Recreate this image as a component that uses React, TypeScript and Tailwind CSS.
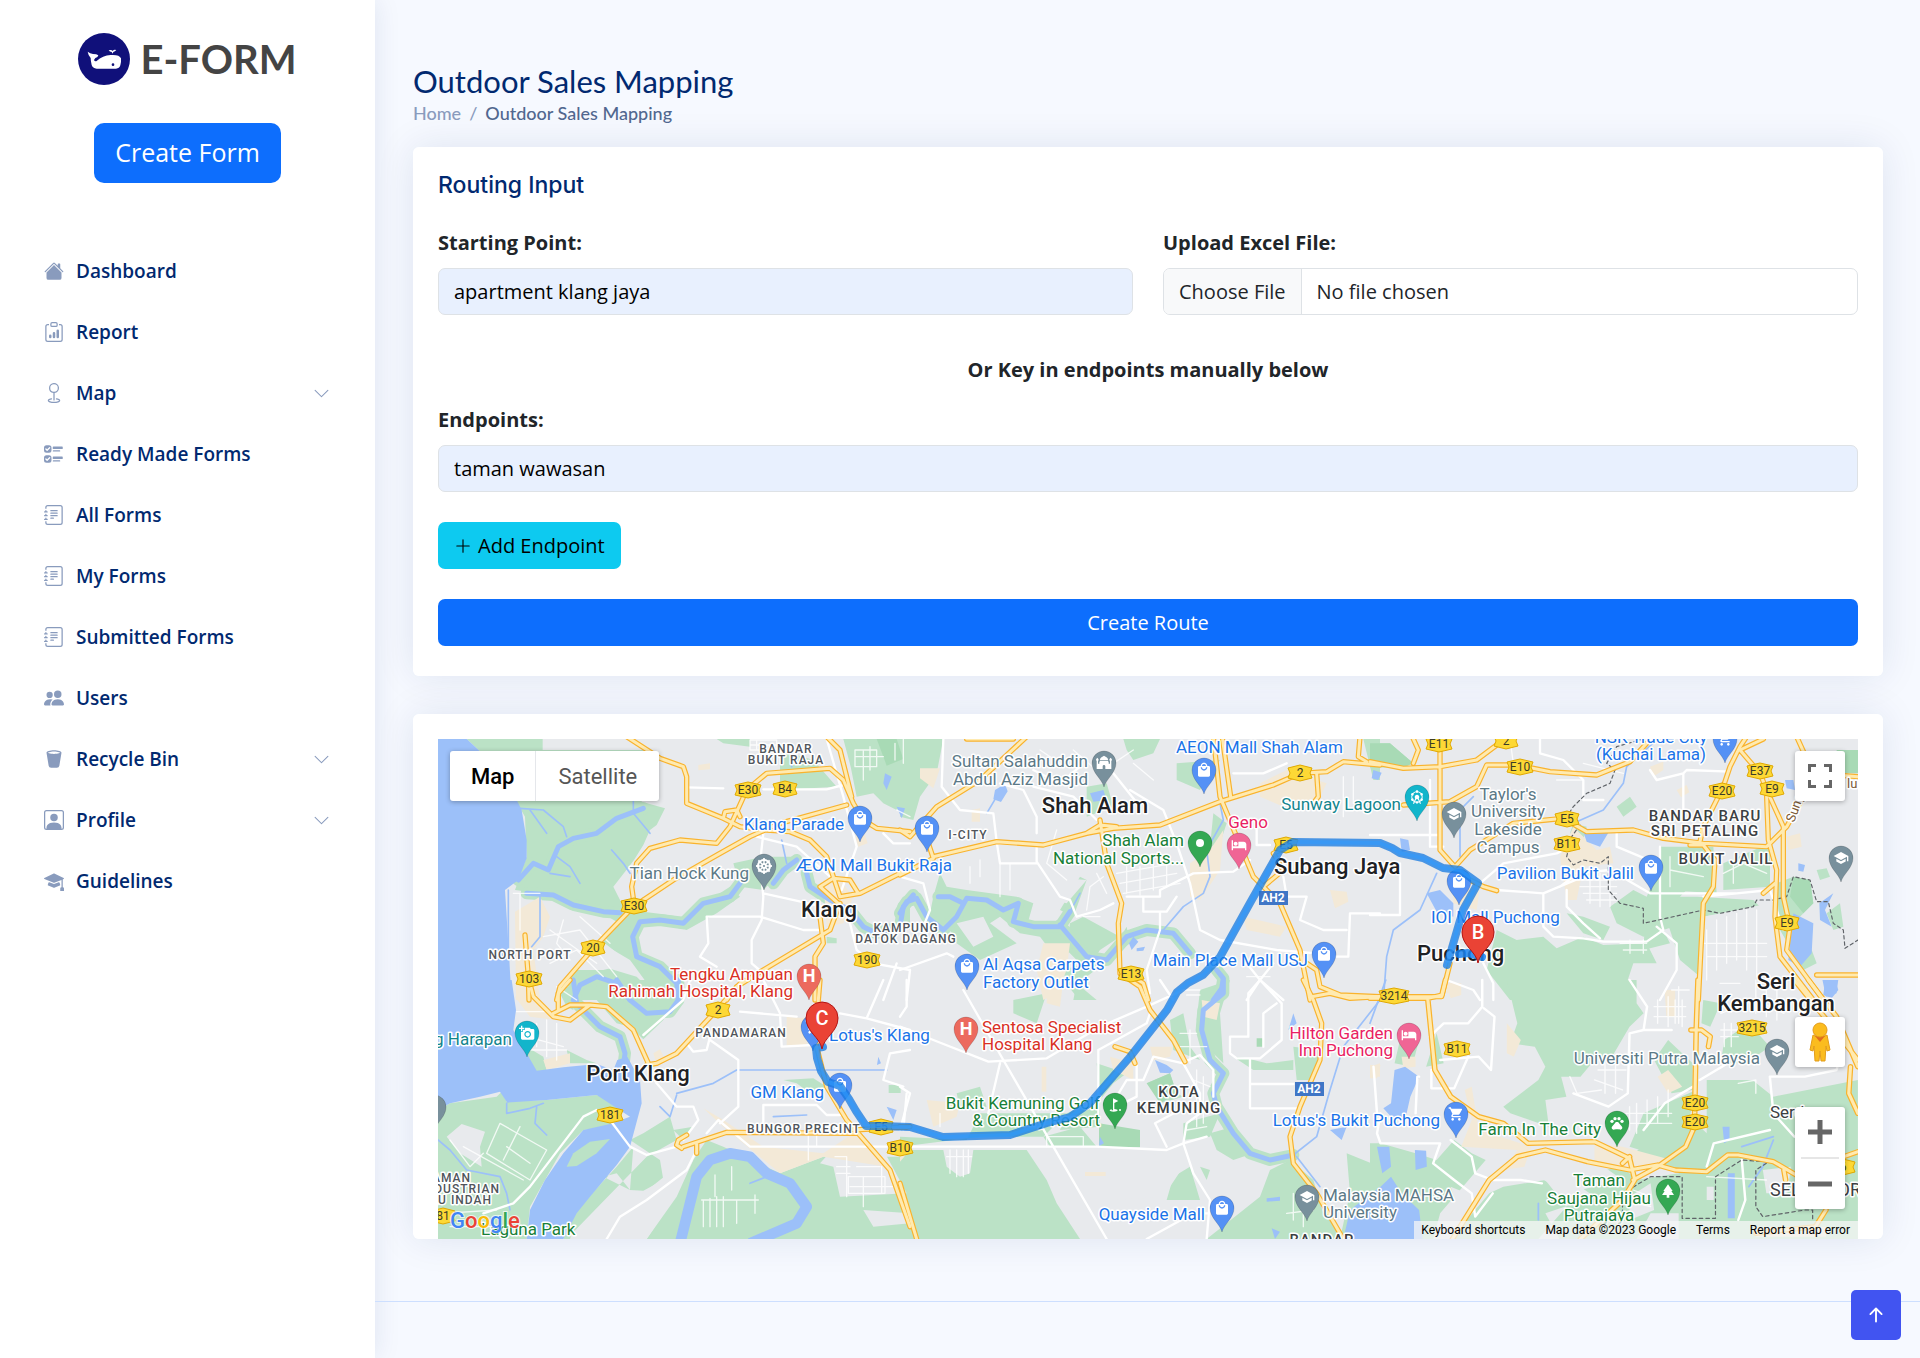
import type { ComponentType, ReactNode } from "react";
import {
  BsArrowUpShort,
  BsChevronDown,
  BsClipboardData,
  BsGeo,
  BsHouseFill,
  BsJournalText,
  BsMortarboardFill,
  BsPeopleFill,
  BsPersonSquare,
  BsPlusLg,
  BsTrash2Fill,
  BsUiChecks,
} from "react-icons/bs";
import {
  MdAddAPhoto,
  MdAttractions,
  MdGolfCourse,
  MdHotel,
  MdLocalMall,
  MdMosque,
  MdPark,
  MdPets,
  MdSchool,
  MdShoppingCart,
} from "react-icons/md";
import { FaDharmachakra } from "react-icons/fa";

type Icon = ComponentType<any>;

/* ---------------------------------------------------------------- sidebar */

const NAV: { label: string; icon: Icon; menu?: boolean }[] = [
  { label: "Dashboard", icon: BsHouseFill },
  { label: "Report", icon: BsClipboardData },
  { label: "Map", icon: BsGeo, menu: true },
  { label: "Ready Made Forms", icon: BsUiChecks },
  { label: "All Forms", icon: BsJournalText },
  { label: "My Forms", icon: BsJournalText },
  { label: "Submitted Forms", icon: BsJournalText },
  { label: "Users", icon: BsPeopleFill },
  { label: "Recycle Bin", icon: BsTrash2Fill, menu: true },
  { label: "Profile", icon: BsPersonSquare, menu: true },
  { label: "Guidelines", icon: BsMortarboardFill },
];

function WhaleLogo() {
  return (
    <svg viewBox="0 0 156 156" className="size-[52px]" aria-hidden="true">
      <circle cx="78" cy="78" r="78" fill="#10107a" />
      <path
        fill="#fff"
        d="M29 56Q36 62 45 63Q56 63 61 67Q60 73 52 75L48 81Q50 86 56 84Q74 68 98 66Q124 64 129 76Q130 88 127 97Q124 107 114 107H56Q44 106 41 96Q38 84 38 75Q31 68 29 56Z"
      />
      <path fill="#fff" d="M92 52Q101 49 104 54Q108 48 115 51Q111 56 106 57L104 62L101 57Q95 57 92 52Z" />
      <circle cx="105" cy="95" r="4" fill="#10107a" />
    </svg>
  );
}

function Sidebar() {
  return (
    <aside className="flex w-[375px] shrink-0 flex-col bg-white px-[25px] shadow-[0_0_25px_rgba(1,41,112,0.1)]">
      <a href="#" className="mt-[33px] flex items-center justify-center gap-2.5">
        <WhaleLogo />
        <span className="font-[Lato] text-[40px] leading-[50px] font-bold text-[#444]">E-FORM</span>
      </a>
      <button
        type="button"
        className="mt-[38px] h-[60px] self-center rounded-[10px] bg-[#0d6efd] px-[21px] text-[25px] text-white"
      >
        Create Form
      </button>
      <nav className="mt-[60px]">
        <ul className="flex flex-col gap-[5px]">
          {NAV.map(({ label, icon: Glyph, menu }) => (
            <li key={label}>
              <a
                href="#"
                className="flex h-14 items-center rounded pr-5 pl-[19px] text-[19px] font-semibold text-[#012970]"
              >
                <Glyph className="mr-3 size-5 text-[#899bbd]" />
                {label}
                {menu && <BsChevronDown className="ml-auto size-[17px] text-[#899bbd]" />}
              </a>
            </li>
          ))}
        </ul>
      </nav>
    </aside>
  );
}

/* --------------------------------------------------------------- map data */

/* The terrain is drawn on six sheets: A B C along the top, D E F below. */
const SHEET = {
  A: "translate(-8 -9) scale(.33333)",
  B: "translate(462 -9) scale(.33333)",
  C: "translate(932 -9) scale(.33333)",
  D: "translate(-8 241) scale(.33333)",
  E: "translate(462 241) scale(.33333)",
  F: "translate(932 241) scale(.35075 .33333)",
} as const;

type Sheets = Partial<Record<keyof typeof SHEET, string>>;

const GREEN: Sheets = {
  A: "M110 27H338V60H640L635 215L705 235L680 285L660 300L640 345L612 390L585 425L550 470L575 520L610 540L560 575L500 540L430 540L330 490L255 480L290 380L285 260L200 110ZM1240 27H1440V210L1400 240L1360 220L1330 190L1280 200L1262 110ZM1050 60L1150 90L1220 170L1050 180ZM860 27H960V50L880 40ZM640 500L515 640L600 690L640 745L680 800L740 740L650 700L620 640L640 570L770 600L860 550L930 500L900 470L760 560L640 545ZM910 400L1000 380L1100 380L1000 480L930 470ZM430 720L520 710L620 740L680 800V810H430ZM1190 620l30 5v15h-30ZM1440 500L1410 560L1440 600Z",
  B: "M0 27H130L110 130L60 200L40 270L0 260ZM670 27H780L760 70L700 90L680 60ZM830 100L960 90L900 180L830 150ZM560 170L620 160L640 230L560 260ZM120 430L140 470L200 480L350 500L400 520L380 590L470 580L540 600L560 640L520 650L480 700L420 620L360 610L300 560L270 580L350 640L240 690L170 640L150 600L90 550L100 500ZM550 560L660 620L600 660L560 720L500 660L510 580ZM480 540L540 440L560 450L520 560ZM680 590L690 640L560 740L520 770L480 720L620 690ZM1390 27H1440V150H1420ZM530 760l60 50h-70ZM940 250l40 30-20 60-30 10Z",
  C: "M0 40L60 40L130 100L100 112H0ZM610 280L650 290L640 330L600 310ZM860 430L930 450L950 480L870 560L900 590L820 620L740 580L720 530L790 480L830 500ZM380 600L440 630L520 620L560 655L640 620L700 645L830 640L860 700L790 700L770 760L790 810H420L350 720ZM590 550L640 560L720 590L700 630L640 610ZM830 500L980 500L1150 510L1170 530L1000 560L880 600L900 640L820 660ZM870 350L1030 350L1040 490L880 480ZM1060 400L1200 340V470L1060 480ZM1270 440L1320 450L1330 520L1290 560L1210 520L1220 460ZM1340 420L1370 415L1380 440L1350 450ZM1370 550L1410 520L1420 590L1390 600ZM890 570L1000 540L990 740L930 690ZM1220 470L1280 540L1340 700L1300 720L1230 600ZM740 230l40-30 20 30-40 30Z",
  D: "M24 390L60 370L200 350L215 335L230 365L350 360L500 345L580 370L540 400L560 440L460 450L390 520L300 680L290 777H24ZM610 500L600 630L560 580L520 590L470 600L450 680L420 777H400L440 690L560 560ZM410 777L470 600L520 590L600 630L640 632L700 600L690 540L600 480L640 460L720 410L740 480L650 530ZM650 777L740 640L790 540L830 480L880 500L1050 580L1180 530H1440V777ZM500 0H760L700 120L640 178L600 140L560 130L500 60ZM290 200L340 230L350 270L320 275L290 230ZM410 210L470 240L500 250L420 250ZM1060 300L1150 295L1190 320L1140 340L1100 310ZM1376 315h36v24h-36ZM380 20h50v70l-20-10ZM730 450L790 440L760 480Z",
  E: "M0 510H380L440 600L470 670L540 777H0ZM340 60L440 40L410 130L340 100ZM430 470L540 440L590 500H450ZM240 400L500 400L430 470H240L0 500V470L200 480ZM170 340L240 320L260 380L180 390ZM740 310L810 280L830 340L850 350L780 370L770 340ZM810 120L850 100L870 200L900 240L820 210ZM500 400L600 360V440L480 450ZM590 250L680 280L640 310L600 360ZM930 460L1000 440L1030 500L1060 520L1000 540L950 510ZM1000 230L1060 270L1180 270V240L1100 250L1040 235ZM870 560L900 660H800L820 590ZM900 560L930 570L920 600ZM1170 540L1240 600L1270 700L1340 777H920L980 730L1080 650L1110 570ZM1180 200L1260 210L1240 300L1190 300ZM850 430L960 400L930 470L850 480ZM900 30L990 0L960 100L970 250L920 200L890 120ZM1340 520L1440 560V777H1320L1350 640ZM490 0H560L530 50Z",
  F: "M390 0H760V70L780 100L740 140L690 230L640 240L600 290L545 290L560 350L500 360L510 440L400 400L380 380L480 300L500 260L470 200L400 190L420 130ZM0 490L30 490L130 520L190 540L240 480L290 520L330 540L200 700L180 777H0ZM230 777L340 640L380 620L500 600L560 680L480 777ZM560 590L640 650L500 700L540 777H760L800 700L880 700L880 580L760 600L720 560ZM740 530L800 480L900 400L960 460L960 300L1090 300L1150 350L1391 300V777H880V570L780 560ZM810 240L850 180L920 250V330L860 340ZM1010 180L1080 130L1140 200L1070 250L1000 250ZM190 160L210 250L160 260ZM90 160L140 180L120 260L70 250ZM950 60L1000 70L970 140L945 130ZM740 500L780 400L930 330L900 460L800 520Z",
};

const PARK: Sheets = {
  A: "M1340 27h60l20 60-50 20Z",
  C: "M0 40L60 40L130 100L100 112H0ZM1400 60H1464V130H1400ZM1270 440L1320 450L1330 520L1300 550L1260 500Z",
  E: "M597 430L720 450V502H597ZM740 310L810 280L830 340L780 370ZM1070 175h20v25h-20Z",
};

const GREY: Sheets = {
  A: "M340 590L420 540L480 570L500 620L600 700L520 720L440 720L380 780L330 810V650Z",
  B: "M170 580L250 560L280 620L220 650ZM430 440L560 450L500 520L420 500Z",
  C: "M620 450L720 450L740 520L640 510ZM1000 560L1200 520L1220 640L1100 700L1000 690Z",
  D: "M50 470L95 432L165 455L150 500L155 560L90 520ZM1190 528H1370L1430 640L1230 650L1210 560L1170 550ZM1300 690L1440 700V730L1330 740ZM640 640L740 560L790 540L740 650L650 777H520L520 720Z",
  E: "M130 510H220L210 580L180 590L140 560ZM590 560L780 520L850 560L790 650L640 660Z",
  F: "M340 560L460 520L640 540L720 600L560 640L480 590L360 620ZM1120 570L1200 560L1190 640L1130 640ZM740 650L800 610L810 690L740 720ZM230 620L300 650L260 720ZM960 620h20v40h-20Z",
};

const SAND: Sheets = {
  A: "M255 545L330 500L360 560L340 620L310 660L330 810H258ZM1180 450L1230 450L1270 500L1240 580L1190 590ZM805 105l35-5v18l-35 3ZM1275 320l30-5 8 25-28 10Z",
  B: "M930 360L970 300L960 420L900 510L870 500L870 400ZM1080 160L1160 120L1280 160L1260 200L1150 230L1080 200ZM430 640L510 640L500 720L470 790L430 810L410 720ZM1030 560L1160 590L1140 620L1040 600ZM1290 480l50 5 5 30-40 20ZM215 240l25-5v40h-25ZM60 115h60l-20 60-40-30Z",
  C: "M610 290L680 360L720 350L730 400L640 410L620 510L590 510L570 380ZM250 480L330 470L320 540L250 520ZM230 760h40v30h-40ZM1250 320l40-10 5 40-40 10ZM920 180l30-15 8 22-25 15ZM840 110l40-15v25l-30 20Z",
  D: "M340 240L420 220V250L350 270ZM820 385L880 420L1000 500L1180 520L1270 460L1370 560L1180 530L1050 580L880 440ZM1070 110l60 5v85h-60ZM255 50L330 60L380 120L300 110ZM670 220l20-12 15 30-25 15Z",
  E: "M80 360L180 370L170 410L100 440ZM750 200L820 200L810 230L760 240ZM630 230L700 250V300L640 270ZM425 260h14v75h-14ZM555 576h62v12h-62ZM440 0H490L480 80L440 70ZM905 60L960 70L950 120L910 110ZM1410 260l30-10v40h-20ZM0 510h30L0 545Z",
  F: "M390 130L430 180L410 230L390 220ZM90 230H130V260L95 265ZM270 330L290 320L310 450L460 500L440 560L380 570L420 510L260 500L290 420ZM640 490L720 500L860 540L800 580L720 560L640 540ZM840 30h30v80h-25ZM820 290l30-20 40 50-40 20ZM215 10h45v35l-30 10ZM0 255h30l-10 40H0ZM1100 740h200v30h-200Z",
};

const WATER: Sheets = {
  A: "M24 27H110L200 110L250 190L275 240L290 330L290 385L265 450L225 480L230 560L245 810H24ZM1365 130l20 10-15 40-10-20ZM1400 230l25 5-10 30Z",
  B: "M285 180l30-18 8 22-20 32-23-8ZM570 190l40-10 10 30-40 5ZM700 620l15 15-20 25-8-20ZM710 655l25-5-5 12-20 2Z",
  C: "M170 490L210 480L250 520L250 560L200 545ZM640 305L720 300L690 350L650 335ZM1270 550L1330 580L1325 670L1290 710L1255 690ZM1348 520L1390 490L1365 540L1385 590L1350 570ZM1365 755l30-5 10 30-20 25-25-10ZM1285 400l20 5-5 20-15-3ZM1245 150l25 0 5 30-25-5ZM90 325l25 5 5 30-25 5ZM10 120l25 8-10 22-20-5Z",
  D: "M24 0H245L258 90L250 150L290 220L320 272L400 262L500 252L550 270L562 240L592 230L630 300L635 370L600 500L560 555L480 650L440 700L400 777H290L300 690L345 600L400 520L460 450L540 432L600 410L500 345L350 360L232 368L210 335L150 350L60 370L24 390ZM1345 230l8 20-12 5ZM1370 380l30 10-10 30Z",
  E: "M1330 777L1350 690L1440 620V777ZM1290 450L1340 440L1325 480ZM765 240L800 255L820 270L810 280L780 278ZM1100 655L1140 650V662L1100 665ZM1115 745l25 10-15 22ZM1180 100l10 30-25 20ZM600 470l12 20-15 8Z",
  F: "M70 270L100 260L140 290L115 350L100 420L60 410L38 385L60 370ZM20 500H55L60 560L35 580ZM128 510L160 512L162 560L130 570ZM0 650L60 590L90 640L140 690L150 777H0ZM1020 580H1040V715H1020ZM1290 0H1335L1330 40L1300 50ZM1005 440h20v40l-15 10Z",
};

const ISLAND = "M410 560L430 520L480 485L540 477L500 520L440 558Z";

const RIVER: Sheets = {
  A: "M265 450L310 400L355 420L385 350L430 325L500 310L560 265L640 235M290 490L370 495L430 525L520 545L570 548M1100 390L1060 420L1030 460M930 460L900 500L820 520L760 580L690 570L630 575L608 620L620 680L690 710L740 760L745 810M430 810L450 765L500 740L560 760L600 810M1130 430L1140 470L1200 510L1260 540L1300 590L1340 610L1410 590L1420 530L1450 495",
  B: "M0 550L20 515L50 505L80 560L130 600L170 560L200 505L260 510L310 540L355 520L340 575L400 590L480 590L510 545M115 500L150 500L190 520M480 585L560 680L620 690L680 620L740 600L820 610L870 670M950 720L970 745L965 775L940 810",
  D: "M430 0L440 70L510 140L570 170L585 220L580 260M560 0L600 60L650 100L720 95L745 60V0",
  E: "M970 0L970 40L910 90L905 150L930 240L970 280L940 340L950 380L1000 460L1050 520L1110 540L1180 525",
};

const STREAM: Sheets = {
  A: "M270 235L340 240L400 290L410 320M610 215V250L660 310M380 380L420 410L450 460M330 490V620L305 650M235 480V810M545 360L580 400L600 430M360 430L420 440M1055 330L1070 400M1085 60V110M300 240L350 310",
  B: "M790 600L850 530L910 490L930 440L920 360L970 270L960 220M510 545L540 490M260 250L290 200",
  C: "M310 200L270 240V380M860 30L770 110L760 160L700 240L610 280M200 430L150 540L70 600L50 680L40 810",
  D: "M740 340L850 310L920 270H1370M690 380L720 410L740 345M230 370V400L300 385L340 370M320 380L315 430L350 465M24 480L60 510L110 570L210 590L230 640L240 690M960 610L1010 590M1030 410L1130 405",
  E: "M1180 525L1250 470L1290 330L1330 200L1440 60M1190 530L1260 620",
  F: "M45 0L0 130M1150 480L1120 560L1080 620M480 670V720M1060 500L1150 470",
};

const LOOP = "M750 790L775 690L800 590L840 540L900 520L960 530L1010 580L1080 610L1130 680L1100 730L960 790";

const ROAD: Sheets = {
  A: "M770 172L880 175M1000 178H1190L1240 165M1190 27L1240 200L1280 350L1235 480M1000 310L990 400L1000 500L995 570L965 630V700L1000 730M830 560H990L1120 600H1170M830 560L835 640L810 680L860 710M1000 490L1180 530M1260 580L1280 660L1330 700L1440 720M980 320L1100 350L1200 440M1400 700L1360 810M1360 310L1390 340H1440",
  B: "M130 27L125 170L180 240L280 250L290 335L300 400H410M300 160L370 180L410 260V310M290 340H410V395L480 500L510 510L530 560L600 540L640 520M590 270L520 200L400 170M690 180L790 240L830 340L870 460L900 600L960 630L1130 660L1250 670M680 500H780V480L880 430L1000 425L1050 390M730 500V545H800L830 500M780 545V600L740 720L750 790M1000 130L1090 130L1160 100M1070 290V345H1110M1150 440L1160 500H1220L1200 570L1270 600H1340M1350 550L1345 680H1280M1350 550H1440M0 720L140 670L160 680M30 720L20 810M1040 700L1080 750L1120 700M1080 750L1040 810M1080 750L1150 810M0 440L70 460L90 540L70 590M400 120L480 160L540 110M640 130L720 230",
  C: "M330 460L400 400L560 370L600 350M380 480L520 490L640 440M840 490H1000L1100 490L1200 480M520 490V590L550 620L640 625L700 635L830 635L880 600L870 560V350M590 480V530L640 580L690 625M510 27V70L580 90L640 150V210H700M840 120L860 150L940 130L950 120L1080 125M940 130V240M90 400V555H0M340 700L370 760V810M230 750L310 780L330 810M860 590L920 640V720L870 810M180 150V350H220M0 315H210M620 430L720 420L840 490M740 300V350L860 400M1000 500L1100 490M610 440L570 470M1200 480L1240 600",
  D: "M650 260L680 310L740 380L790 380L805 420L760 480M540 420L600 500L650 525L740 500M500 390L460 410L300 620L250 670L160 700M800 510L770 570L650 660L570 710L530 777M870 430L925 380V240L840 180M840 170L830 210L790 215L770 190M1000 0L1050 100L1055 200L1150 195M930 95L1100 110M1230 100L1310 115L1440 150M1310 115L1360 0M1440 210L1380 220L1360 300L1420 320M1000 375H1160L1190 405H1230M1000 375V430M830 460L865 420L960 500H1370M1430 340L1420 450M640 165L760 60L780 0",
  E: "M190 30L310 240L460 500L620 777M0 140L100 180L265 245L440 235L600 140L740 80L850 30M265 400L300 250M0 500H590L800 510L850 490L920 470M595 210V400M850 490L880 580L930 660L920 777M740 777L880 700H925M650 350L680 300H730L760 230L850 250L900 340V400L860 430L850 490M855 245L900 225L940 270V350M990 170V220L1010 235H1080L1145 180V70L1080 0L1045 40V170H990M1050 240V385H1190M1050 312H1180M765 430L800 500M765 430L840 390M595 210L740 130L750 100M780 0L820 60M710 250V350L650 380M0 320L30 340L0 450M1090 200V100L1130 70M20 0V80L0 110",
  F: "M320 0L320 80L280 130L210 130L170 170M325 85L355 110L345 270L310 230L200 240M30 490H200L180 550L240 600L290 640L300 710L350 640M230 480L290 530L300 580L350 600L430 600L490 610M30 400L20 460L30 490M10 260L20 400M140 290H135L130 400M175 270V325H240L280 230M740 0L790 80L780 150L740 160L735 340L680 380L580 340M940 300L1020 250M1140 290H1240L1330 270L1350 200M1140 290L1150 400L1210 470M960 560L980 490L1140 450M780 450L840 370L920 320M780 150H860M1060 540L1070 660L1050 720",
};

const LANE: Sheets = {
  A: "M340 620L450 600L560 740M360 700L440 660L520 740M400 570L380 640L420 690M450 560L540 640M360 600L500 700M960 30H1040V60H960ZM960 45H1040M980 30V60M1275 60H1340V110H1275ZM1275 80H1360M1300 60V150M1320 50V120M250 490H330M270 490V600M1395 40V90M1420 27V100M1400 240L1440 260",
  B: "M560 540L570 470L610 440M590 430L620 490M650 430L820 400M660 460L830 430M670 490L840 460M680 410V490M720 410V495M760 400V480M800 400V470M210 410V460M240 390V440M300 400V500M330 400V480M470 300L440 400L500 450M700 100L760 150M640 100L700 60M520 60L600 130M420 60L480 100M1040 740H1110M550 560L600 560M1330 140V260M1360 140V220",
  C: "M620 450H730M630 470H740M640 490H740M650 510H740M660 440V520M690 430V530M720 430V530M1010 600V750M1040 570V720M1070 560V700M1100 550V690M1130 540V720M1160 540V740M990 640H1190M1010 680H1190M1050 760H1110M750 640H830M760 660H830M780 630V670M820 630V670M1060 430L1120 400L1190 430M1090 390V460M900 420L1000 440M900 380V470M420 27L430 100M560 150H640M640 100L760 130",
  D: "M100 500L280 600M210 430L350 510L300 600L170 520ZM60 480L120 560L160 520M230 500L300 550M270 440L220 540M815 660H985M820 660V740M840 655V740M860 650V740M880 650V740M920 660V730M975 645V700M855 585V650M905 560V630M1215 530H1250V650M1220 560H1260M1220 580H1260M1255 590H1365V640H1255ZM1300 590V680M1280 560H1350M1355 560V640M1260 620H1390M320 130V200M350 120V230M380 130V240M290 170L400 200M300 210H410M260 95H380M40 700L200 690M60 740H260M380 20L440 60M1135 460V540M1160 440V500",
  E: "M150 510V580M170 510V590M190 510V590M205 510V580M140 530H215M840 160H890M840 200H920M870 150V250M890 270V440M910 290V430M880 300L930 320M860 450L920 440M440 500V470H550V500M120 400V440M1180 640V720M1210 640V740M1160 700L1240 690M850 30H900M860 45H900",
  F: "M820 60V130M850 50V140M870 60V130M890 60V140M810 80H900M810 110H900M740 380V450M760 370V460M790 360V440M820 350V430M850 330V410M730 400H860M740 430H860M880 20V130M860 30H910M640 300L720 330M650 270H730M670 250V340M700 250V340M1000 150H1050M1000 170H1050M1010 130V200M1030 130V200M1000 100L1100 60L1180 100M1100 0V100M1130 20V110M1160 30V120M570 290L590 340L660 330M750 630L800 650M760 670L800 680M960 590L1130 600M1100 340V300L1050 310",
};

const DASH: Sheets = {
  C: "M820 27L740 50L710 100L735 120L720 160L650 190L610 230L590 260M630 285L605 320L590 380L610 405L640 390L690 400L715 380V480L750 520L820 535V580L1000 540L1050 550L1150 530L1160 510L1210 510L1250 500L1270 440L1320 450L1340 515L1375 515L1390 580L1420 600L1425 655L1464 630",
  F: "M720 700V640L800 590H890V715H985V590L1060 540L1120 545M1130 550L1100 570V680L1120 710L1240 690H1262V720",
};

const HIGHWAY: Sheets = {
  A: "M590 20L690 85L760 110L770 140V220L880 265L930 290L1010 300L1080 305L1140 330L1190 380L1210 440L1230 500M612 520L605 470L620 400L660 355L750 330L860 340L900 290L950 180L1010 130L1200 115L1240 150L1270 220L1300 270L1340 295L1440 305M380 810L390 770L490 655L610 530L730 450L870 370L960 320L1050 280L1250 225M1190 20L1230 60L1265 200M1230 500L1290 490L1440 415M1230 520L1200 600L1000 720L920 770L890 810M1170 560L1180 640L1155 680V810M285 615L295 740L297 810M880 265L885 245L920 240L930 260M1225 520L1170 470L1210 445L1260 450L1285 490",
  B: "M0 300L30 320L110 230L240 150L380 20M100 380L290 335L430 345L560 310L640 295L780 285L960 215L1120 165L1200 130L1280 125L1330 95L1440 105M0 435L100 385L85 340M600 270L620 400L665 520L655 580L660 730M690 735L730 760L745 810M940 20L960 200L1010 320L1060 440L1140 520L1200 660L1230 810M968 30L992 200M1380 20L1375 80L1400 95M1250 130L1255 200L1240 220M1180 340L1120 370L1150 420L1090 470M1220 700L1250 720L1260 770L1320 795L1440 800M200 27H340M560 310L600 285L650 290",
  C: "M0 95L100 115L210 110L320 90L400 30M210 50V360L250 405M100 225L240 215L320 170L350 105L440 105L540 125L680 135L780 95L830 40M255 410L300 360L430 280L580 265L650 305L790 300L880 325L1000 340L1190 350L1250 290L1300 200M1000 345L1035 390L1030 470L1000 520L985 810M990 335L1000 290L1030 230L1060 170L1080 110L1110 50L1130 20M1110 60L1170 130L1190 180L1240 290L1240 500L1260 590L1250 660L1360 810M1190 200L1195 330L1220 420L1215 560L1230 680L1330 810M1280 20L1330 130L1464 140M1464 735H1340M300 450L340 470L380 482M240 700L215 800H0M1110 60L1180 27M130 27L145 60L130 100M960 345H1000M1215 460L1180 490",
  D: "M297 0L310 50L370 110L420 120L480 75L530 80L610 150L655 250M420 0L385 40V90M370 100L420 75L480 75M650 255L680 250L740 220L860 90L940 0M760 500L890 457L1280 460M755 505L740 495L745 480L770 465M1170 0L1155 180L1190 320L1250 420L1380 570L1440 740M1270 450L1440 440M800 490V520",
  E: "M690 0L720 20L750 90L820 180L855 245M645 200L690 215L705 250M1210 0L1240 60L1265 130L1260 240L1200 380L1170 470L1180 550L1250 640L1330 777M1235 50L1290 40L1350 55L1440 50M0 610L50 777M0 440L20 442",
  F: "M215 0L205 45L165 55H0M165 60L185 270L230 350L310 410L380 430L450 490L640 485L740 535L755 600L720 660L600 777M235 777L340 600L420 530L500 510L620 545L740 570L820 555L870 570L960 575L1020 525L1050 525L1150 545L1215 585M750 600L820 560L900 500L925 440L930 150L935 0M915 150H945L970 170L965 200M1210 0L1310 130L1391 240M1250 0L1330 110L1391 260M1370 260L1365 340L1391 400M1270 560L1391 515M1300 690L1270 740L1100 760M720 550L740 530M1180 570L1185 600",
};

type Label = [text: string, x: number, y: number, anchor?: "start" | "middle" | "end"];

const BLUE_LABELS: Label[] = [
  ["Klang Parade", 406, 91, "end"],
  ["ÆON Mall Bukit Raja", 358, 132],
  ["AEON Mall Shah Alam", 738, 14],
  ["Main Place Mall USJ", 870, 227, "end"],
  ["Al Aqsa Carpets", 545, 231],
  ["Factory Outlet", 545, 249],
  ["Pavilion Bukit Jalil", 1196, 140, "end"],
  ["IOI Mall Puchong", 993, 184],
  ["NSK Trade City", 1213, 4, "middle"],
  ["(Kuchai Lama)", 1213, 21, "middle"],
  ["Lotus's Klang", 391, 302],
  ["GM Klang", 386, 359, "end"],
  ["Quayside Mall", 767, 481, "end"],
  ["Lotus's Bukit Puchong", 1002, 387, "end"],
];
const GREY_LABELS: Label[] = [
  ["Tian Hock Kung", 311, 140, "end"],
  ["Sultan Salahuddin", 650, 28, "end"],
  ["Abdul Aziz Masjid", 650, 46, "end"],
  ["Taylor's", 1070, 61, "middle"],
  ["University", 1070, 78, "middle"],
  ["Lakeside", 1070, 96, "middle"],
  ["Campus", 1070, 114, "middle"],
  ["Malaysia MAHSA", 885, 462],
  ["University", 885, 479],
  ["Universiti Putra Malaysia", 1322, 325, "end"],
];
const GREEN_LABELS: Label[] = [
  ["Shah Alam", 746, 107, "end"],
  ["National Sports...", 746, 125, "end"],
  ["Bukit Kemuning Golf", 662, 370, "end"],
  ["& Country Resort", 662, 387, "end"],
  ["Farm In The City", 1163, 396, "end"],
  ["Taman", 1161, 447, "middle"],
  ["Saujana Hijau", 1161, 465, "middle"],
  ["Putrajaya", 1161, 482, "middle"],
  ["Laguna Park", 43, 496],
];
const RED_LABELS: Label[] = [
  ["Tengku Ampuan", 355, 241, "end"],
  ["Rahimah Hospital, Klang", 355, 258, "end"],
  ["Sentosa Specialist", 544, 294],
  ["Hospital Klang", 544, 311],
];
const PINK_LABELS: Label[] = [
  ["Geno", 810, 89, "middle"],
  ["Hilton Garden", 955, 300, "end"],
  ["Inn Puchong", 955, 317, "end"],
];
const TEAL_LABELS: Label[] = [
  ["Sunway Lagoon", 963, 71, "end"],
  ["Tanjung Harapan", 74, 306, "end"],
];
const CITY_LABELS: Label[] = [
  ["Klang", 391, 178, "middle"],
  ["Shah Alam", 657, 74, "middle"],
  ["Subang Jaya", 836, 135],
  ["Puchong", 979, 222],
  ["Seri", 1338, 250, "middle"],
  ["Kembangan", 1338, 272, "middle"],
  ["Port Klang", 200, 342, "middle"],
];
const AREA_LABELS: Label[] = [
  ["BANDAR", 348, 14, "middle"],
  ["BUKIT RAJA", 348, 25, "middle"],
  ["KAMPUNG", 468, 193, "middle"],
  ["DATOK DAGANG", 468, 204, "middle"],
  ["NORTH PORT", 92, 220, "middle"],
  ["I-CITY", 530, 100, "middle"],
  ["PANDAMARAN", 303, 298, "middle"],
  ["BUNGOR PRECINT", 366, 394, "middle"],
  ["TAMAN", 33, 443, "end"],
  ["INDUSTRIAN", 62, 454, "end"],
  ["PULAU INDAH", 54, 465, "end"],
];
const DISTRICT_LABELS: Label[] = [
  ["BANDAR BARU", 1267, 82, "middle"],
  ["SRI PETALING", 1267, 97, "middle"],
  ["BUKIT JALIL", 1288, 125, "middle"],
  ["KOTA", 741, 358, "middle"],
  ["KEMUNING", 741, 374, "middle"],
  ["BANDAR", 884, 506, "middle"],
];

const SHIELDS: [text: string, x: number, y: number][] = [
  ["E30", 310, 51], ["B4", 347, 50], ["E30", 196, 167], ["20", 155, 209], ["103", 91, 240],
  ["190", 429, 221], ["E5", 848, 106], ["2", 862, 34], ["E13", 693, 235], ["E11", 1001, 5],
  ["2", 1068, 2], ["E10", 1082, 28], ["E5", 1129, 80], ["B11", 1129, 105], ["E20", 1284, 52],
  ["E37", 1322, 32], ["E9", 1334, 50], ["E9", 1349, 184], ["3214", 956, 257], ["2", 280, 271],
  ["181", 172, 376], ["E5", 443, 388], ["B10", 462, 409], ["81", 5, 477], ["B11", 1019, 310],
  ["3215", 1314, 289], ["E20", 1257, 364], ["E20", 1257, 383], ["6", 1405, 428],
];

const BLUE = "#5491f5";
const SLATE = "#78909c";
const PINS: [x: number, y: number, color: string, glyph: Icon | "H" | "dot"][] = [
  [422, 103, BLUE, MdLocalMall],
  [326, 151, SLATE, FaDharmachakra],
  [371, 261, "#ec6a5e", "H"],
  [666, 48, SLATE, MdMosque],
  [766, 55, BLUE, MdLocalMall],
  [489, 113, BLUE, MdLocalMall],
  [762, 128, "#34a853", "dot"],
  [801, 130, "#f06595", MdHotel],
  [886, 239, BLUE, MdLocalMall],
  [529, 251, BLUE, MdLocalMall],
  [979, 82, "#12b5cb", MdAttractions],
  [1016, 99, SLATE, MdSchool],
  [1213, 152, BLUE, MdLocalMall],
  [1021, 166, BLUE, MdLocalMall],
  [1287, 24, BLUE, MdShoppingCart],
  [1403, 143, SLATE, MdSchool],
  [375, 312, BLUE, MdShoppingCart],
  [89, 318, "#12b5cb", MdAddAPhoto],
  [402, 370, BLUE, MdLocalMall],
  [-4, 392, SLATE, "dot"],
  [528, 314, "#ec6a5e", "H"],
  [677, 390, "#34a853", MdGolfCourse],
  [784, 493, BLUE, MdLocalMall],
  [869, 482, SLATE, MdSchool],
  [971, 320, "#f06595", MdHotel],
  [1018, 399, BLUE, MdShoppingCart],
  [1179, 408, "#34a853", MdPets],
  [1339, 336, SLATE, MdSchool],
  [1230, 476, "#34a853", MdPark],
];

/* ------------------------------------------------------------ map drawing */

function Layer({ data, ...paint }: { data: Sheets } & Record<string, any>) {
  return (
    <g strokeLinejoin="round" strokeLinecap="round" {...paint}>
      {(Object.keys(data) as (keyof typeof SHEET)[]).map((key) => (
        <path key={key} d={data[key]} transform={SHEET[key]} />
      ))}
    </g>
  );
}

function Labels({ items, className }: { items: Label[]; className: string }) {
  return (
    <g className={className}>
      {items.map(([text, x, y, anchor]) => (
        <text key={text + x + y} x={x} y={y} textAnchor={anchor ?? "start"}>
          {text}
        </text>
      ))}
    </g>
  );
}

function Shield({ text, x, y }: { text: string; x: number; y: number }) {
  const w = text.length > 3 ? 15 : text.length > 2 ? 13 : 12;
  return (
    <g transform={`translate(${x} ${y})`}>
      <path
        d={`M${-w} -5L0 -8L${w} -5L${w - 2} 0L${w} 5L0 8L${-w} 5L${2 - w} 0Z`}
        fill="#fdd835"
        stroke="#e0a800"
        strokeLinejoin="round"
      />
      <text y="4" textAnchor="middle" className="fill-[#3c3c28] text-[12px]">
        {text}
      </text>
    </g>
  );
}

function Pin({ x, y, color, glyph }: { x: number; y: number; color: string; glyph: Icon | "H" | "dot" }) {
  let inner: ReactNode;
  if (glyph === "H") {
    inner = (
      <text y="-18" textAnchor="middle" className="fill-white text-[18px] font-bold">
        H
      </text>
    );
  } else if (glyph === "dot") {
    inner = <circle cy="-24" r="4" fill="#fff" />;
  } else {
    const Glyph = glyph;
    inner = <Glyph x="-8" y="-32" width="16" height="16" color="#fff" />;
  }
  return (
    <g transform={`translate(${x} ${y})`}>
      <path
        d="M0 0C-2 -8 -12 -14 -12 -24A12 12 0 0 1 12 -24C12 -14 2 -8 0 0Z"
        fill={color}
        stroke="#000"
        strokeOpacity=".15"
      />
      {inner}
    </g>
  );
}

function RouteMarker({ x, y, letter }: { x: number; y: number; letter: string }) {
  return (
    <g transform={`translate(${x} ${y})`}>
      <path
        d="M0 1C-2 -11 -16 -16 -16 -30A16 16 0 0 1 16 -30C16 -16 2 -11 0 1Z"
        fill="#ea4335"
        stroke="#b31412"
      />
      <text y="-23" textAnchor="middle" className="fill-white text-[20px] font-medium">
        {letter}
      </text>
    </g>
  );
}

function MapDrawing() {
  const route =
    "M385 308L378 309L379 319L383 332L390 343L402 347L411 360L418 372L428 387L443 387L472 388L505 398L572 396L609 384L632 378L652 364L692 318L729 271L739 253L750 244L765 236L782 218L812 164L842 111L855 103L942 104L954 109L962 114L985 119L1005 129L1022 131L1040 144L1025 171L1018 195L1009 226";
  return (
    <svg
      viewBox="0 0 1420 500"
      preserveAspectRatio="xMidYMid slice"
      className="block size-full bg-[#e8eaed] font-[Roboto]"
      role="img"
      aria-label="Route from Klang to Puchong"
    >
      <Layer data={GREEN} fill="#bbe2c6" />
      <Layer data={RIVER} fill="none" stroke="#bbe2c6" strokeWidth="36" />
      <Layer data={GREY} fill="#e8eaed" />
      <Layer data={PARK} fill="#a8dab5" />
      <Layer data={SAND} fill="#f3e9d7" />
      <Layer data={WATER} fill="#9cc0f9" />
      <path d={ISLAND} transform={SHEET.D} fill="#bbe2c6" />
      <Layer data={RIVER} fill="none" stroke="#9cc0f9" strokeWidth="15" />
      <path d={LOOP} transform={SHEET.D} fill="none" stroke="#9cc0f9" strokeWidth="32" strokeLinejoin="round" />
      <Layer data={STREAM} fill="none" stroke="#9cc0f9" strokeWidth="5" />
      <Layer data={LANE} fill="none" stroke="#fff" strokeOpacity=".8" strokeWidth="4" />
      <Layer data={ROAD} fill="none" stroke="#fff" strokeWidth="7" />
      <Layer data={DASH} fill="none" stroke="#5f6368" strokeWidth="3.5" strokeDasharray="10 9" />
      <Layer data={HIGHWAY} fill="none" stroke="#f9b32d" strokeWidth="16" />
      <Layer data={HIGHWAY} fill="none" stroke="#ffeab0" strokeWidth="9" />

      {SHIELDS.map(([text, x, y]) => (
        <Shield key={text + x + y} text={text} x={x} y={y} />
      ))}
      {[
        [835, 159],
        [871, 350],
      ].map(([x, y]) => (
        <g key={x} transform={`translate(${x} ${y})`}>
          <rect x="-14" y="-7" width="29" height="14" fill="#3f76c6" />
          <text y="4" textAnchor="middle" className="fill-white text-[12px] font-bold">
            AH2
          </text>
        </g>
      ))}

      {PINS.map(([x, y, color, glyph]) => (
        <Pin key={`${x}-${y}`} x={x} y={y} color={color} glyph={glyph} />
      ))}

      <g stroke="#fff" strokeWidth="3" strokeLinejoin="round" paintOrder="stroke">
        <Labels items={BLUE_LABELS} className="fill-[#1a73e8] text-[17px]" />
        <Labels items={GREY_LABELS} className="fill-[#5c7987] text-[17px]" />
        <Labels items={GREEN_LABELS} className="fill-[#188038] text-[17px]" />
        <Labels items={RED_LABELS} className="fill-[#d93025] text-[17px]" />
        <Labels items={PINK_LABELS} className="fill-[#e91e63] text-[17px]" />
        <Labels items={TEAL_LABELS} className="fill-[#12858d] text-[17px]" />
        <Labels items={AREA_LABELS} className="fill-[#50555b] text-[12px] font-medium tracking-[1px]" />
        <Labels items={DISTRICT_LABELS} className="fill-[#3c4043] text-[15px] font-medium tracking-[1px]" />
        <Labels items={CITY_LABELS} className="fill-[#202124] text-[22px] font-medium" />
        <text x="1332" y="379" className="fill-[#3c4043] text-[17px]">
          Serdang
        </text>
        <text x="1332" y="457" className="fill-[#3c4043] text-[18px]">
          SELANGOR
        </text>
        <text transform="translate(1356 84) rotate(-70)" className="fill-[#7b5a36] text-[13px]">
          Sungai
        </text>
        <text x="1409" y="49" className="fill-[#7b5a36] text-[13px]">
          lu
        </text>
      </g>

      <g fill="none" strokeLinecap="round" strokeLinejoin="round">
        <path d={route} stroke="#1478e0" strokeOpacity=".75" strokeWidth="8" />
        <path d={route} stroke="#2f9bff" strokeOpacity=".6" strokeWidth="4" />
        <path d="M1021 215L1030 214L1044 218" stroke="#1a82f0" strokeOpacity=".85" strokeWidth="8" />
      </g>
      <RouteMarker x={1040} y={223} letter="B" />
      <RouteMarker x={384} y={309} letter="C" />

      <text
        x="12"
        y="489"
        className="text-[22px] font-medium"
        stroke="#fff"
        strokeWidth="2"
        strokeOpacity=".7"
        paintOrder="stroke"
      >
        <tspan fill="#4285f4">G</tspan>
        <tspan fill="#ea4335">o</tspan>
        <tspan fill="#fbbc04">o</tspan>
        <tspan fill="#4285f4">g</tspan>
        <tspan fill="#34a853">l</tspan>
        <tspan fill="#ea4335">e</tspan>
      </text>
    </svg>
  );
}

function Pegman() {
  return (
    <svg viewBox="0 0 24 40" className="h-10 w-6" aria-hidden="true">
      <path
        d="M5 13Q12 17 19 13L22 28L19 29L18 24L17 39H13L12 29L11 39H7L6 24L5 29L2 28Z"
        fill="#fbbc1e"
        stroke="#e39d1b"
      />
      <path d="M7 14H17L12 20Z" fill="#e06c1f" />
      <circle cx="12" cy="8" r="7" fill="#fbbc1e" stroke="#e39d1b" />
    </svg>
  );
}

function MapView() {
  const control = "absolute rounded-[3px] bg-white shadow-[0_1px_5px_rgba(0,0,0,0.3)]";
  return (
    <div className="relative h-[500px] overflow-hidden font-[Roboto]">
      <MapDrawing />
      <div className={`${control} top-3 left-3 flex h-[50px] text-[22px]`}>
        <button type="button" className="border-r border-gray-200 px-[21px] font-medium text-black">
          Map
        </button>
        <button type="button" className="px-[22px] text-[#565656]">
          Satellite
        </button>
      </div>
      <button
        type="button"
        aria-label="Toggle fullscreen view"
        className={`${control} top-3 right-[13px] flex size-[50px] items-center justify-center`}
      >
        <svg viewBox="0 0 24 24" className="size-6" fill="none" stroke="#666" strokeWidth="3">
          <path d="M1.5 8V1.5H8M16 1.5H22.500V8M22.500 16V22.500H16M8 22.500H1.500V16" />
        </svg>
      </button>
      <div className="absolute right-[13px] bottom-[30px] flex flex-col gap-10">
        <button
          type="button"
          aria-label="Street View"
          className="flex size-[50px] items-center justify-center rounded-[3px] bg-white shadow-[0_1px_5px_rgba(0,0,0,0.3)]"
        >
          <Pegman />
        </button>
        <div className="flex w-[50px] flex-col items-center rounded-[3px] bg-white shadow-[0_1px_5px_rgba(0,0,0,0.3)]">
          <button type="button" aria-label="Zoom in" className="flex size-[50px] items-center justify-center">
            <svg viewBox="0 0 24 24" className="size-6">
              <path d="M0 9.500H9.500V0H14.500V9.500H24V14.500H14.500V24H9.500V14.500H0Z" fill="#666" />
            </svg>
          </button>
          <span className="h-0.5 w-[38px] bg-[#e6e6e6]" />
          <button type="button" aria-label="Zoom out" className="flex size-[50px] items-center justify-center">
            <svg viewBox="0 0 24 24" className="size-6">
              <path d="M0 9.500H24V14.500H0Z" fill="#666" />
            </svg>
          </button>
        </div>
      </div>
      <div className="absolute right-0 bottom-0 flex h-[18px] items-center gap-5 bg-[#f5f5f5]/75 pr-2 pl-[7px] text-[12px] leading-[18px] text-black">
        <button type="button">Keyboard shortcuts</button>
        <span>Map data ©2023 Google</span>
        <a href="#">Terms</a>
        <a href="#">Report a map error</a>
      </div>
    </div>
  );
}

/* ------------------------------------------------------------------- form */

function RoutingForm() {
  const label = "block text-[20px] leading-[30px] font-bold text-[#212529]";
  const field = "mt-2.5 block h-[47px] w-full rounded-[7px] border border-[#dee2e6] text-[20px]";
  return (
    <form className="flex flex-col px-[25px] pt-[25px] pb-[30px]" onSubmit={(e) => e.preventDefault()}>
      <h2 className="font-[Inter] text-[23px] leading-[26px] font-medium text-[#012970]">Routing Input</h2>
      <div className="mt-[30px] grid grid-cols-2 gap-[30px]">
        <div>
          <label htmlFor="start" className={label}>
            Starting Point:
          </label>
          <input
            id="start"
            type="text"
            defaultValue="apartment klang jaya"
            className={`${field} bg-[#e8f0fe] px-[15px] text-black`}
          />
        </div>
        <div>
          <label htmlFor="excel" className={label}>
            Upload Excel File:
          </label>
          <input
            id="excel"
            type="file"
            className={`${field} overflow-hidden bg-white text-[#212529] file:mr-[15px] file:h-[45px] file:border-0 file:border-r file:border-solid file:border-[#dee2e6] file:bg-[#f8f9fa] file:px-[15px] file:text-[#212529]`}
          />
        </div>
      </div>
      <p className="mt-10 text-center text-[20px] leading-[30px] font-bold text-[#212529]">
        Or Key in endpoints manually below
      </p>
      <label htmlFor="endpoint" className={`${label} mt-5`}>
        Endpoints:
      </label>
      <input
        id="endpoint"
        type="text"
        defaultValue="taman wawasan"
        className={`${field} bg-[#e8f0fe] px-[15px] text-black`}
      />
      <button
        type="button"
        className="mt-[30px] flex h-[47px] items-center gap-1.5 self-start rounded-[7px] bg-[#0dcaf0] px-4 text-[20px] text-black"
      >
        <BsPlusLg className="size-[18px]" />
        Add Endpoint
      </button>
      <button type="submit" className="mt-[30px] h-[47px] rounded-[7px] bg-[#0d6efd] text-[20px] text-white">
        Create Route
      </button>
    </form>
  );
}

export default function App() {
  const card = "overflow-hidden rounded-[6px] bg-white";
  return (
    <div className="flex min-h-screen bg-[#f6f9ff] font-['Open_Sans',sans-serif] text-[#444]">
      <Sidebar />
      <div className="flex min-w-0 grow flex-col">
        <main className="pt-[63px] pr-[37px] pl-[38px]">
          <h1 className="font-[Lato] text-[31px] leading-[37px] text-[#012970]">Outdoor Sales Mapping</h1>
          <nav aria-label="Breadcrumb" className="font-[Lato] text-[18px] leading-[27px] font-medium">
            <ol className="flex gap-2">
              <li>
                <a href="#" className="text-[#899bbd]">
                  Home
                </a>
              </li>
              <li className="text-[#899bbd]" aria-hidden="true">
                /
              </li>
              <li className="text-[#51678f]">Outdoor Sales Mapping</li>
            </ol>
          </nav>
          <section className="mt-5 rounded-[6px] shadow-[0_0_38px_rgba(1,41,112,0.1)]">
            <div className={card}>
              <RoutingForm />
            </div>
          </section>
          <section className="mt-[38px] rounded-[6px] shadow-[0_0_38px_rgba(1,41,112,0.1)]">
            <div className={`${card} px-[25px] pt-[25px]`}>
              <MapView />
            </div>
          </section>
        </main>
        <footer className="mt-[62px] border-t border-[#cddfff] py-7" />
      </div>
      <a
        href="#"
        aria-label="Back to top"
        className="fixed right-[19px] bottom-[18px] flex size-[50px] items-center justify-center rounded-[5px] bg-[#4154f1] text-white"
      >
        <BsArrowUpShort className="size-[30px]" />
      </a>
    </div>
  );
}
